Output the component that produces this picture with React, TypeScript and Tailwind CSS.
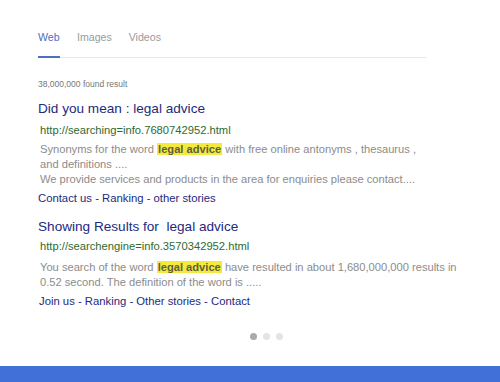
import React from "react";

function Hl({ children }: { children: React.ReactNode }) {
  return (
    <span className="bg-[#f4ea3c] px-[1px] font-bold text-[#5f5f40]">{children}</span>
  );
}

export default function App() {
  return (
    <div
      className="w-[500px] h-[382px] bg-white flex flex-col overflow-hidden whitespace-nowrap"
      style={{ fontFamily: '"Liberation Sans", Arial, sans-serif' }}
    >
      <div className="flex-1 pl-[38px] pr-[74px]">
        <div className="pt-[30px] flex gap-[17px] text-[10.6px] leading-[14px] border-b border-[#e6e6ea]">
          <div className="text-[#4a6fc4] pb-[12px] border-b-2 border-[#4a6fc4] -mb-px w-[22px]">Web</div>
          <div className="text-[#9a9a9a]">Images</div>
          <div className="text-[#9a9a9a]">Videos</div>
        </div>
        <div className="mt-[20px] text-[8.5px] text-[#777]">38,000,000 found result</div>

        <div className="mt-[9px] text-[13.6px] text-[#232a7e] leading-[18px]">Did you mean : legal advice</div>
        <div className="mt-[5px] pl-[2px] text-[11.2px] text-[#2f6a30] leading-[15px]">http://searching=info.7680742952.html</div>
        <div className="mt-[4px] pl-[2px] text-[11.15px] text-[#8c8c8c] leading-[15px]">
          Synonyms for the word <Hl>legal advice</Hl> with free online antonyms , thesaurus ,
          <br />
          and definitions ....
          <br />
          We provide services and products in the area for enquiries please contact....
        </div>
        <div className="mt-[3px] text-[11.3px] text-[#232a7e] leading-[16px]">Contact us - Ranking - other stories</div>

        <div className="mt-[12px] text-[13.6px] text-[#232a7e] leading-[18px]">Showing Results for&nbsp; legal advice</div>
        <div className="mt-[3px] pl-[2px] text-[11.2px] text-[#2f6a30] leading-[15px]">http://searchengine=info.3570342952.html</div>
        <div className="mt-[6px] pl-[2px] text-[11.15px] text-[#8c8c8c] leading-[15px]">
          You search of the word <Hl>legal advice</Hl> have resulted in about 1,680,000,000 results in
          <br />
          0.52 second. The definition of the word is .....
        </div>
        <div className="mt-[3px] pl-[1px] text-[11.3px] text-[#232a7e] leading-[16px]">Join us - Ranking - Other stories - Contact</div>

        <div className="mt-[24px] flex gap-[6px] pl-[212px]">
          <div className="w-[7px] h-[7px] rounded-full bg-[#aaaaaa]" />
          <div className="w-[7px] h-[7px] rounded-full bg-[#e4e4e4]" />
          <div className="w-[7px] h-[7px] rounded-full bg-[#e4e4e4]" />
        </div>
      </div>
      <div className="h-[16px] bg-[#4170d8]" />
    </div>
  );
}
